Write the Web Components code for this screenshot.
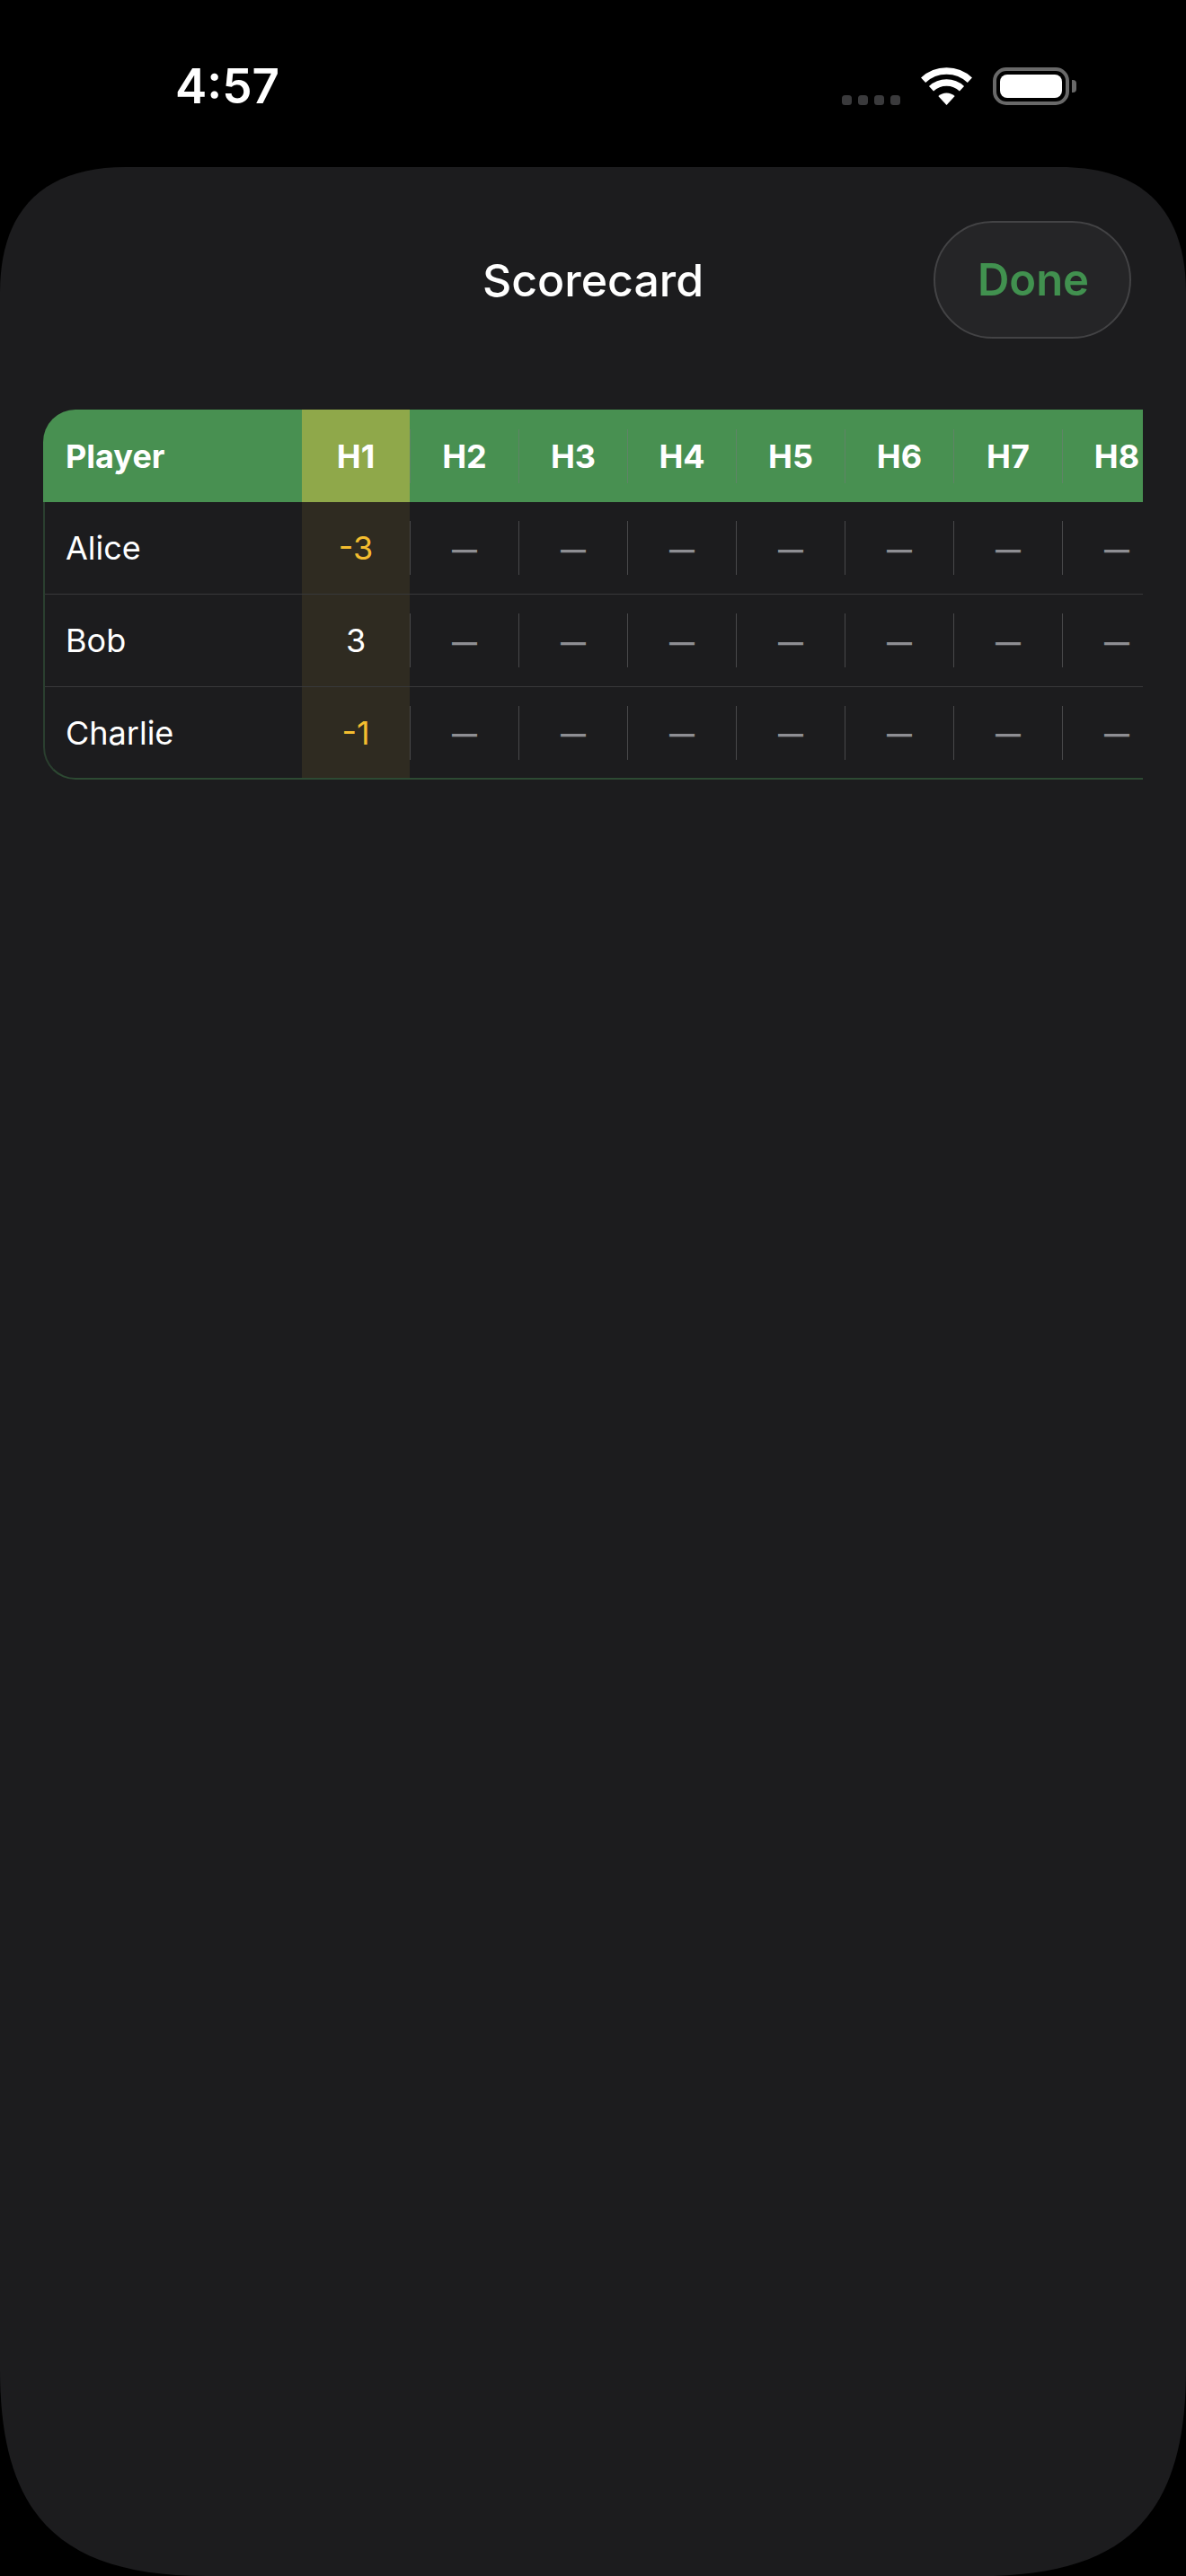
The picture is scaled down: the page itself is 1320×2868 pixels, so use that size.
<!DOCTYPE html>
<html>
<head>
<meta charset="utf-8">
<title>Scorecard</title>
<style>
  html, body { margin: 0; padding: 0; background: #000; }
  body { width: 1320px; height: 2868px; overflow: hidden; font-family: Inter, Roboto, "Liberation Sans", sans-serif; color: #fff; }
</style>
</head>
<body>
<score-app></score-app>

<script>
class StatusBar extends HTMLElement {
  connectedCallback() {
    this.attachShadow({ mode: 'open' }).innerHTML = `
      <style>
        :host {
          display: flex;
          justify-content: space-between;
          align-items: flex-end;
          box-sizing: border-box;
          height: 186px;
          padding: 75px 122px 69px 195px;
        }
        .time { font-size: 53px; line-height: 42px; font-weight: 600; }
        .icons { display: flex; align-items: flex-end; }
        .dots { display: flex; gap: 7px; margin-right: 23px; }
        .dots i { width: 11px; height: 11px; border-radius: 3.5px; background: #3a3a3c; }
        svg { display: block; margin-right: 23px; }
        .battery { display: flex; align-items: center; gap: 3px; }
        .shell {
          box-sizing: border-box;
          width: 85px;
          height: 42px;
          padding: 4px;
          border: 4px solid #696969;
          border-radius: 15px;
        }
        .fill { height: 100%; background: #fff; border-radius: 8px; }
        .nub { width: 5px; height: 14px; background: #696969; border-radius: 0 4px 4px 0; }
      </style>
      <span class="time">4:57</span>
      <div class="icons">
        <div class="dots"><i></i><i></i><i></i><i></i></div>
        <svg width="57" height="42" viewBox="0 0 57 42" fill="none" stroke="#fff" stroke-width="7.5">
          <path d="M2.6 14.2A38 38 0 0 1 54.4 14.2"/>
          <path d="M11.5 23.7A25 25 0 0 1 45.5 23.7"/>
          <path d="M28.5 42L19.3 32.1A13.5 13.5 0 0 1 37.7 32.1Z" fill="#fff" stroke="none"/>
        </svg>
        <div class="battery">
          <div class="shell"><div class="fill"></div></div>
          <div class="nub"></div>
        </div>
      </div>
    `;
  }
}

class SheetHeader extends HTMLElement {
  connectedCallback() {
    this.attachShadow({ mode: 'open' }).innerHTML = `
      <style>
        :host {
          display: grid;
          grid-template-columns: 1fr auto 1fr;
          align-items: center;
          padding: 60px 61px 0;
        }
        h1 { grid-column: 2; margin: 0; font-size: 50px; line-height: 60px; font-weight: 500; }
        button {
          grid-column: 3;
          justify-self: end;
          box-sizing: border-box;
          width: 220px;
          height: 131px;
          padding: 0 0 0 2px;
          border: 2px solid #434345;
          border-radius: 68px;
          background: #252527;
          color: #41914f;
          font: 600 49px Inter, Roboto, sans-serif;
        }
      </style>
      <h1><slot></slot></h1>
      <button>Done</button>
    `;
  }
}

class ScoreCell extends HTMLElement {
  connectedCallback() {
    this.attachShadow({ mode: 'open' }).innerHTML = `
      <style>
        :host {
          display: flex;
          align-items: center;
          flex: none;
          width: 120px;
          margin-right: 1px;
          font-size: 36px;
          color: #8e8e93;
        }
        :host([head]) { font-weight: 700; color: #fff; }
        :host([empty]) { font-size: 28px; font-weight: 700; }
        :host([empty]) .box { padding-top: 3px; box-sizing: border-box; }
        :host([current]) { background: #2f2b21; color: #fff; }
        :host([head][current]) { background: #8fa84a; }
        :host([tone="under"]) { color: #f4bd2f; }
        .box {
          display: flex;
          align-items: center;
          justify-content: center;
          width: 100%;
          height: 60px;
          box-shadow: 1px 0 0 #48484a;
        }
        :host([head]) .box { box-shadow: 1px 0 0 #5f8466; }
      </style>
      <div class="box"><slot></slot></div>
    `;
  }
}

class ScoreRow extends HTMLElement {
  connectedCallback() {
    const name = this.getAttribute('name');
    this.attachShadow({ mode: 'open' }).innerHTML = `
      <style>
        :host { display: flex; box-sizing: border-box; height: 103px; width: max-content; border-bottom: 1px solid #38383a; }
        :host([last]) { height: 101px; border-bottom: 0; }
        :host([head]) { background: #489051; border-bottom: 0; }
        .name {
          display: flex;
          align-items: center;
          box-sizing: border-box;
          flex: none;
          width: 286px;
          padding-left: 23px;
          font-size: 36px;
          color: #fff;
        }
        :host([head]) .name { width: 288px; padding-left: 25px; font-weight: 700; }
      </style>
      <div class="name">${name}</div>
      <slot></slot>
    `;
  }
}

class ScoreTable extends HTMLElement {
  connectedCallback() {
    this.attachShadow({ mode: 'open' }).innerHTML = `
      <style>
        :host { display: block; margin: 79px 48px 0; overflow: hidden; }
        .table { width: max-content; border-top-left-radius: 36px; overflow: hidden; }
        .body {
          border-left: 2px solid #2a3f2f;
          border-bottom: 2px solid #2d4a33;
          border-bottom-left-radius: 36px;
          overflow: hidden;
        }
      </style>
      <div class="table">
        <slot name="head"></slot>
        <div class="body"><slot></slot></div>
      </div>
    `;
  }
}

class ScoreApp extends HTMLElement {
  connectedCallback() {
    const players = [
      { name: 'Alice', score: '-3', tone: 'under' },
      { name: 'Bob', score: '3', tone: '' },
      { name: 'Charlie', score: '-1', tone: 'under' }
    ];
    const holes = [1, 2, 3, 4, 5, 6, 7, 8];

    const headCells = holes.map(h => `<score-cell head ${h === 1 ? 'current' : ''}>H${h}</score-cell>`).join('');
    const rows = players.map((p, i) => `
      <score-row name="${p.name}" ${i === players.length - 1 ? 'last' : ''}>
        ${holes.map(h => h === 1
          ? `<score-cell current tone="${p.tone}">${p.score}</score-cell>`
          : `<score-cell empty>—</score-cell>`).join('')}
      </score-row>`).join('');

    this.attachShadow({ mode: 'open' }).innerHTML = `
      <style>
        :host { display: block; width: 1320px; height: 2868px; }
        .sheet {
          height: 2682px;
          background: #1c1c1e;
          overflow: hidden;
          clip-path: path("M0 140C0 48 48 0 140 0H1180C1272 0 1320 48 1320 140V2452C1320 2615 1253 2682 1090 2682H230C67 2682 0 2615 0 2452Z");
        }
      </style>
      <status-bar></status-bar>
      <div class="sheet">
        <sheet-header>Scorecard</sheet-header>
        <score-table>
          <score-row slot="head" head name="Player">${headCells}</score-row>
          ${rows}
        </score-table>
      </div>
    `;
  }
}

customElements.define('status-bar', StatusBar);
customElements.define('sheet-header', SheetHeader);
customElements.define('score-cell', ScoreCell);
customElements.define('score-row', ScoreRow);
customElements.define('score-table', ScoreTable);
customElements.define('score-app', ScoreApp);
</script>
</body>
</html>
